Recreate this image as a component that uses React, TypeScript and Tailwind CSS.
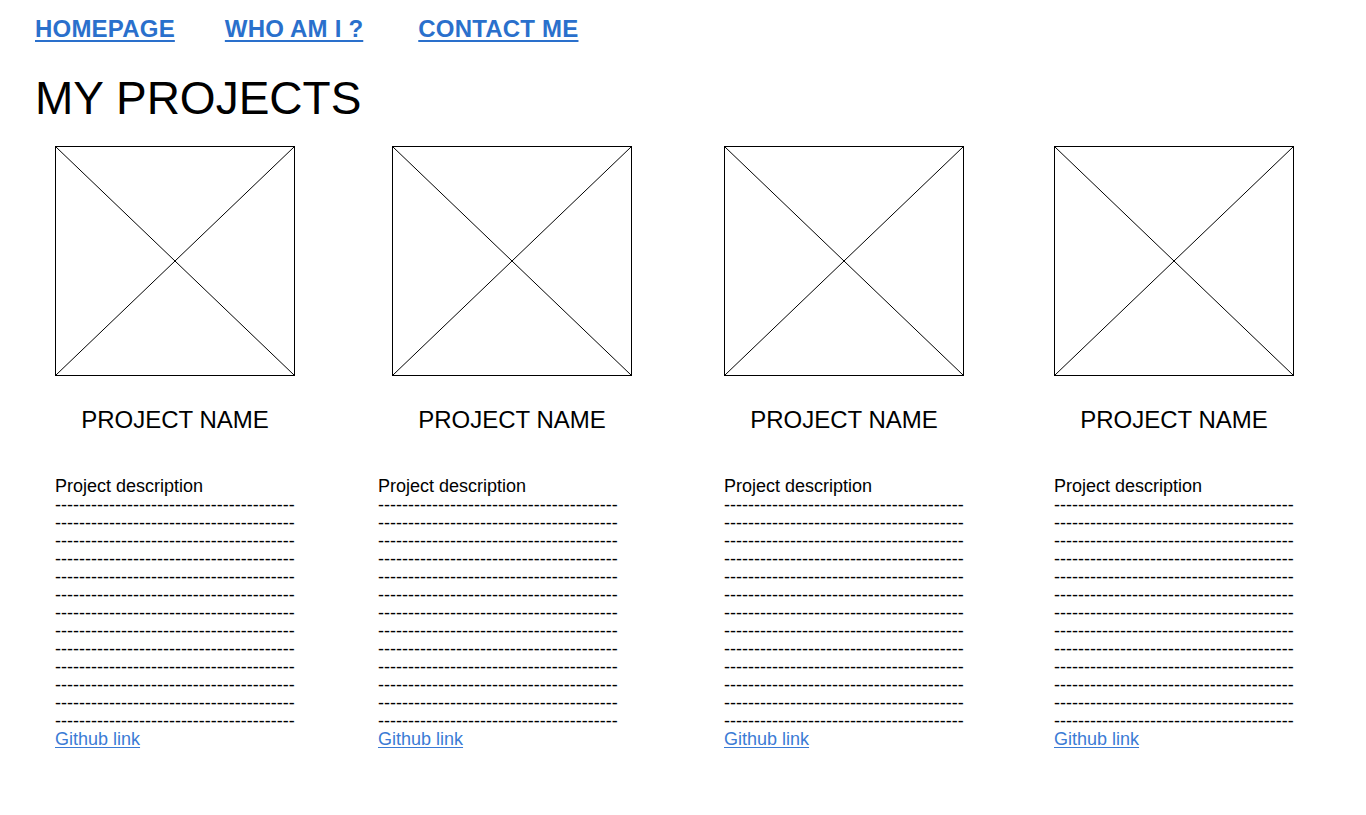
import React from "react";

const DASHES = "-".repeat(40);

function Placeholder() {
  return (
    <div className="w-[240px] h-[230px] border border-black bg-white">
      <svg width="238" height="228" viewBox="0 0 238 228" className="block">
        <line x1="0" y1="0" x2="238" y2="228" stroke="#000" strokeWidth="1" />
        <line x1="238" y1="0" x2="0" y2="228" stroke="#000" strokeWidth="1" />
      </svg>
    </div>
  );
}

function Project({ boxOffset }: { boxOffset: string }) {
  return (
    <div className="flex flex-col">
      <div className={boxOffset}>
        <Placeholder />
        <div className="mt-[30px] w-[240px] text-center text-[24px] leading-[28px] text-black">
          PROJECT NAME
        </div>
      </div>
      <div className="mt-[43px] text-[18px] leading-[18px] text-black">
        <div className="mb-[1px]">Project description</div>
        {Array.from({ length: 13 }).map((_, i) => (
          <div key={i} className="w-[240px] overflow-hidden whitespace-nowrap">
            {DASHES}
          </div>
        ))}
        <a href="#" className="block text-[#3a7bd5] underline underline-offset-2">
          Github link
        </a>
      </div>
    </div>
  );
}

export default function App() {
  return (
    <div
      className="min-h-[815px] bg-white pl-[35px] pt-[15px]"
      style={{ fontFamily: '"Liberation Sans", Arial, sans-serif' }}
    >
      <nav className="flex text-[24px] leading-[28px] font-bold tracking-[0.2px]">
        <a href="#" className="text-[#2a70cc] underline decoration-2 underline-offset-[3px]">HOMEPAGE</a>
        <a href="#" className="ml-[50px] text-[#2a70cc] underline decoration-2 underline-offset-[3px]">WHO AM I ?</a>
        <a href="#" className="ml-[55px] text-[#2a70cc] underline decoration-2 underline-offset-[3px]">CONTACT ME</a>
      </nav>
      <h1 className="mt-[32px] text-[46px] leading-[46px] text-black">MY PROJECTS</h1>
      <div className="mt-[25px] ml-[20px] flex">
        <Project boxOffset="" />
        <div className="ml-[83px]">
          <Project boxOffset="ml-[14px]" />
        </div>
        <div className="ml-[92px]">
          <Project boxOffset="" />
        </div>
        <div className="ml-[90px]">
          <Project boxOffset="" />
        </div>
      </div>
    </div>
  );
}
